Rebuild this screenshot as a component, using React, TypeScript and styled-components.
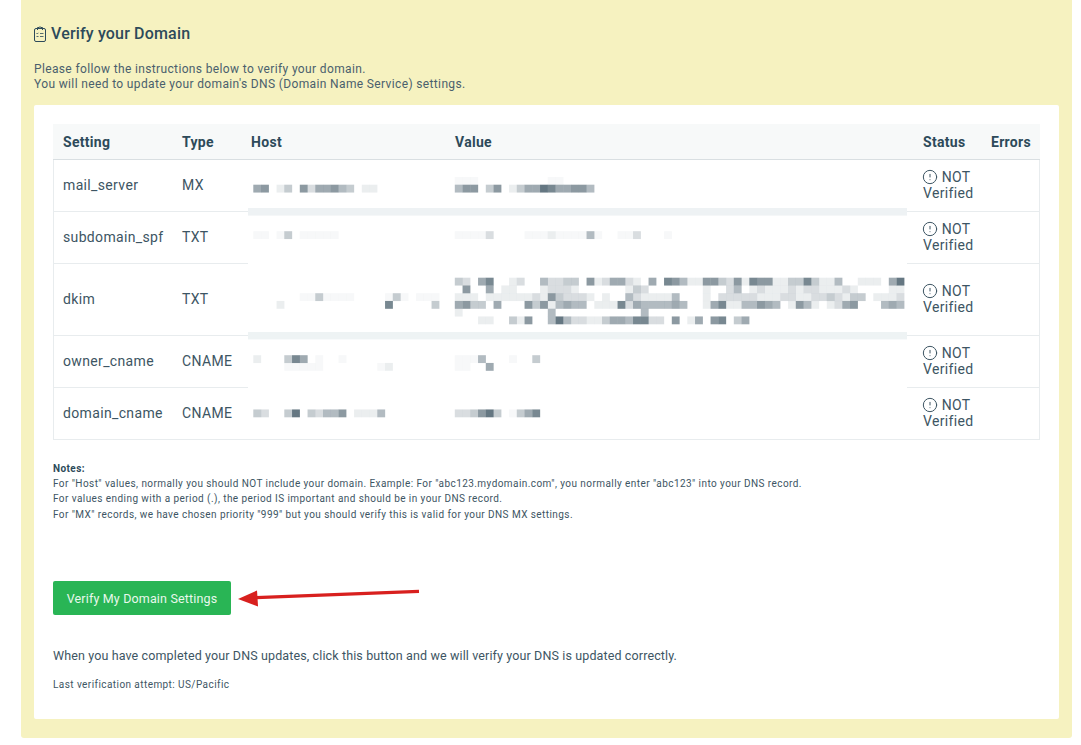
import React from 'react';
import styled, {createGlobalStyle} from 'styled-components';
import {CircleAlert} from 'lucide-react';

const GlobalStyle = createGlobalStyle`
  html, body {
    margin: 0;
    padding: 0;
    background: #fff;
  }
  body {
    font-family: Roboto, "Liberation Sans", sans-serif;
    color: #3d5563;
  }
`;

const Panel = styled.main`
  box-sizing: border-box;
  width: 1051px;
  height: 738px;
  margin-left: 21px;
  padding: 24px 13px 0;
  background: #f6f2c0;
  border-radius: 0 0 3px 3px;
`;

const Heading = styled.h1`
  display: flex;
  align-items: center;
  gap: 5px;
  height: 20px;
  margin: 0;
  font-size: 16px;
  font-weight: 500;
  line-height: 20px;
  letter-spacing: 0.17px;
  color: #2d4a5a;
`;

const HeadingIcon = styled.svg`
  margin-top: -1px;
`;

const Intro = styled.p`
  margin: 17.5px 0 0;
  font-size: 12px;
  line-height: 15.5px;
  letter-spacing: 0.36px;
  color: #4a606d;
`;

const Card = styled.section`
  box-sizing: border-box;
  height: 614px;
  margin-top: 12.5px;
  padding: 19px 19px 0;
  background: #fff;
  border-radius: 2px;
`;

const Table = styled.div`
  display: grid;
  grid-template-columns: 119px 76px 204px 455px 74px 59px;
  grid-template-rows: 36px 52px 52px 72px 52px 52px;
  width: 987px;
`;

const HeadCell = styled.div<{$pad?: number}>`
  display: flex;
  align-items: center;
  padding-left: ${p => p.$pad ?? 10}px;
  background: #f7f9f9;
  border-bottom: 1px solid #d9dfe2;
  font-size: 14px;
  font-weight: 700;
  letter-spacing: 0.3px;
  color: #2d4a5a;
`;

const Cell = styled.div<{$row: number; $col: number; $pad?: number}>`
  grid-row: ${p => p.$row};
  grid-column: ${p => p.$col};
  display: flex;
  align-items: center;
  padding-left: ${p => p.$pad ?? 10}px;
  padding-bottom: 2px;
  border-bottom: 1px solid #e8ecee;
  border-left: ${p => (p.$col === 1 ? '1px solid #e8ecee' : '0')};
  border-right: ${p => (p.$col === 6 ? '1px solid #e8ecee' : '0')};
  font-size: 14px;
  letter-spacing: 0.35px;
  color: #3d5563;
`;

const StatusText = styled.span`
  display: block;
  width: 60px;
  line-height: 16px;
`;

const StatusIcon = styled(CircleAlert)`
  width: 16px;
  height: 16px;
  margin: 0 4px 0 -1.3px;
  vertical-align: -3px;
  stroke-width: 1.5;
`;

const Mosaic = styled.svg`
  grid-column: 3 / 5;
  grid-row: 2 / 7;
  display: block;
  width: 659px;
  height: 280px;
`;

const Notes = styled.div`
  margin-top: 21px;
  font-size: 10px;
  line-height: 15.2px;
  letter-spacing: 0.43px;
  color: #3d5563;
`;

const NotesTitle = styled.strong`
  display: block;
  font-weight: 700;
  color: #2d4a5a;
`;

const ButtonRow = styled.div`
  display: flex;
  align-items: center;
  gap: 7px;
  margin-top: 59.2px;
`;

const VerifyButton = styled.button`
  width: 178px;
  height: 34px;
  padding: 0;
  background: #29b555;
  border: 0;
  border-radius: 2px;
  font-family: inherit;
  font-size: 12.5px;
  letter-spacing: 0.16px;
  color: #e8f8ec;
`;

const Hint = styled.p`
  margin: 32.8px 0 0;
  font-size: 12.5px;
  line-height: 16px;
  letter-spacing: 0.125px;
  color: #3d5563;
`;

const LastAttempt = styled.p`
  margin: 14px 0 0;
  font-size: 10px;
  line-height: 14px;
  letter-spacing: 0.43px;
  color: #3d5563;
`;

// redacted pixels: row, column, one digit per cell ('.' is barely visible)
const CELL = 7.75;
const mosaic: [number, number, string][] = [
  [-1, 26, '...000000000..'],
  [0, 0, '5601306255643011'],
  [0, 26, '466036013558755664'],
  [6, 0, '..0.30.....'],
  [6, 26, '....20000...1....4.00..2000.'],
  [12, 26, '32057001200422330612552105076' + '41166326176611337311400111058'],
  [13, 26, '06005011000122210000001320000' + '00010024012111212211121000011'],
  [14, 0, '000000..3....0000.3.0...'],
  [14, 26, '11101111112163222101004211114' + '00010222221112211223213301112'],
  [15, 0, '00010000000000000700000' + '3'],
  [15, 26, '56330500063614544011172544445' + '40015711446540164101256000454'],
  [16, 26, '10000000000040000000000040000'],
  [17, 26, '00011003160048422113554772206' + '015067035'],
  [22, 0, '10003750.00.'],
  [22, 26, '...4000.003'],
  [23, 0, '0000.....0000000.1'],
  [23, 26, '..005'],
  [29, 0, '32003803244601114'],
  [29, 26, '2236830.357'],
];

const RedactedValues: React.FC = () => (
  <Mosaic viewBox="248 160 659 280">
    <rect x="248" y="208" width="660" height="7.6" fill="#eef2f4" />
    <rect x="248" y="332" width="660" height="7.4" fill="#eef3f4" />
    <rect x="248" y="439" width="660" height="1" fill="#e8ecee" />
    {mosaic.map(([row, col, cells]) =>
      cells.split('').map((c, i) =>
        c === '0' ? null : (
          <rect
            key={`${row}-${col}-${i}`}
            x={253.3 + (col + i) * CELL}
            y={184.7 + row * CELL}
            width={CELL + 0.1}
            height={CELL + 0.1}
            fill="#3f5563"
            fillOpacity={c === '.' ? 0.04 : Number(c) * 0.1}
          />
        ),
      ),
    )}
  </Mosaic>
);

const rows = [
  {setting: 'mail_server', type: 'MX'},
  {setting: 'subdomain_spf', type: 'TXT'},
  {setting: 'dkim', type: 'TXT'},
  {setting: 'owner_cname', type: 'CNAME'},
  {setting: 'domain_cname', type: 'CNAME'},
];

const ClipboardIcon = () => (
  <HeadingIcon width="12" height="16" viewBox="0 0 12 16" fill="none" stroke="#2d4a5a" strokeWidth="1">
    <rect x="0.5" y="2.5" width="11" height="13" rx="1.5" />
    <path d="M3.5 4V1.5H5Q6 0 7 1.5H8.5V4" />
    <path d="M2.5 7.2l0.8 0.8 1-1.2M6 7.5h3.5M2.5 10.5h2M6 10.5h3.5" strokeWidth="0.8" />
  </HeadingIcon>
);

const App: React.FC = () => (
  <>
    <GlobalStyle />
    <Panel>
      <Heading>
        <ClipboardIcon />
        Verify your Domain
      </Heading>
      <Intro>
        Please follow the instructions below to verify your domain.
        <br />
        You will need to update your domain's DNS (Domain Name Service) settings.
      </Intro>
      <Card>
        <Table>
          <HeadCell>Setting</HeadCell>
          <HeadCell>Type</HeadCell>
          <HeadCell $pad={3}>Host</HeadCell>
          <HeadCell $pad={3}>Value</HeadCell>
          <HeadCell $pad={16}>Status</HeadCell>
          <HeadCell>Errors</HeadCell>
          <RedactedValues />
          {rows.map((row, i) => (
            <React.Fragment key={row.setting}>
              <Cell $row={i + 2} $col={1} $pad={9}>
                {row.setting}
              </Cell>
              <Cell $row={i + 2} $col={2}>
                {row.type}
              </Cell>
              <Cell $row={i + 2} $col={5} $pad={16}>
                <StatusText>
                  <StatusIcon />
                  NOT Verified
                </StatusText>
              </Cell>
              <Cell $row={i + 2} $col={6} />
            </React.Fragment>
          ))}
        </Table>
        <Notes>
          <NotesTitle>Notes:</NotesTitle>
          For "Host" values, normally you should NOT include your domain. Example: For "abc123.mydomain.com", you normally enter "abc123" into your DNS record.
          <br />
          For values ending with a period (.), the period IS important and should be in your DNS record.
          <br />
          For "MX" records, we have chosen priority "999" but you should verify this is valid for your DNS MX settings.
        </Notes>
        <ButtonRow>
          <VerifyButton>Verify My Domain Settings</VerifyButton>
          <svg width="182" height="20" viewBox="0 0 182 20">
            <path d="M181 3.4L18 9.6" stroke="#d8201e" strokeWidth="3.4" fill="none" />
            <path d="M0 11L19 2.5L20 18.5Z" fill="#d8201e" />
          </svg>
        </ButtonRow>
        <Hint>When you have completed your DNS updates, click this button and we will verify your DNS is updated correctly.</Hint>
        <LastAttempt>Last verification attempt: US/Pacific</LastAttempt>
      </Card>
    </Panel>
  </>
);

export default App;
